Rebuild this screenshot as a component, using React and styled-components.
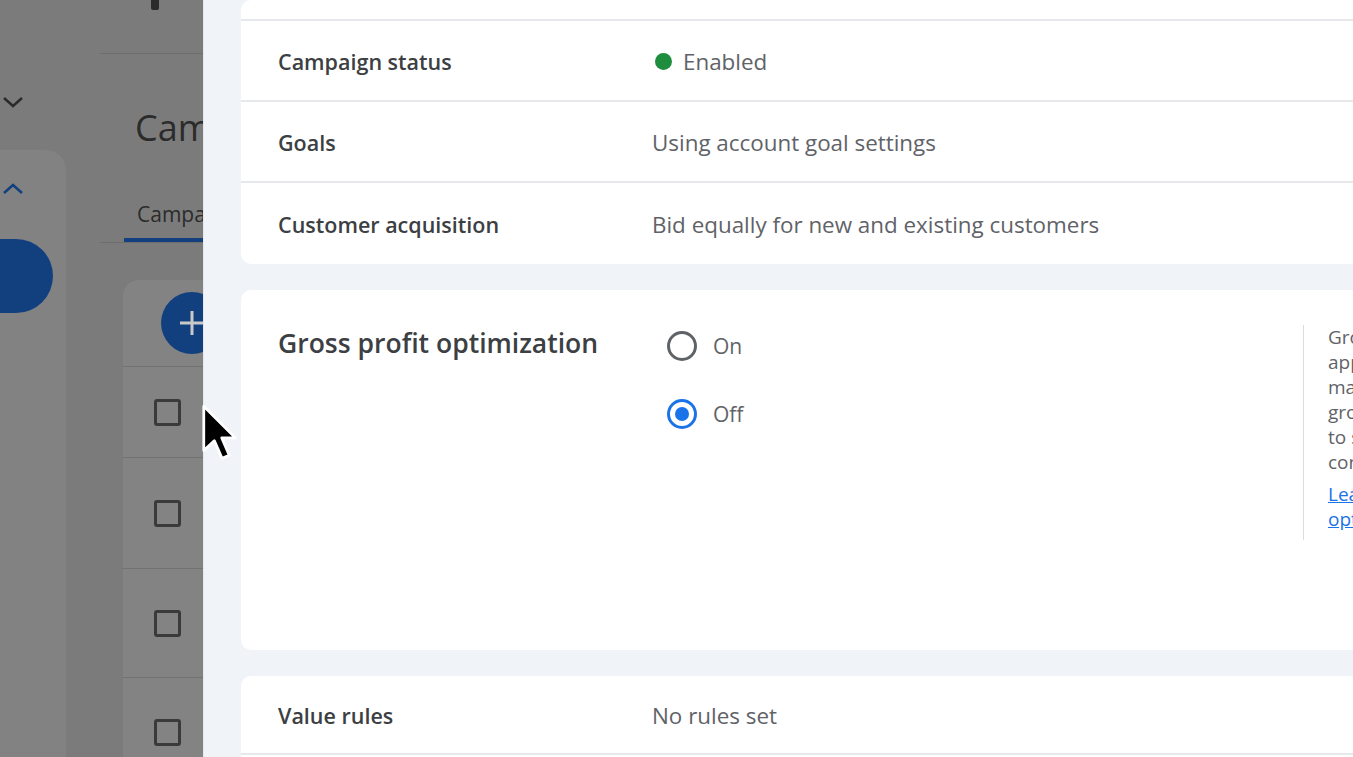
import React from 'react'
import styled, { createGlobalStyle } from 'styled-components'

const GlobalStyle = createGlobalStyle`
  html, body { margin: 0; height: 100%; overflow: hidden; }
  body { font-family: "Open Sans", Roboto, "Liberation Sans", sans-serif; }
  svg { display: block; }
`;

const Screen = styled.div`
  position: relative;
  display: flex;
  width: 1353px;
  height: 757px;
  overflow: hidden;
`;

/* dimmed page behind the side panel */
const Backdrop = styled.div`
  flex: none;
  width: 203px;
  display: flex;
  background: #7b7b7b;
  overflow: hidden;
`;

const NavRail = styled.div`
  flex: none;
  width: 66px;
  display: flex;
  flex-direction: column;
`;

const RailTop = styled.div`
  flex: none;
  height: 150px;
  padding: 96px 0 0 2px;
  box-sizing: border-box;
`;

const NavCard = styled.div`
  flex: 1;
  background: #828282;
  border-top-right-radius: 20px;
  padding: 33px 0 0 2px;
`;

const Pill = styled.div`
  width: 100px;
  height: 74px;
  margin: 44px 0 0 -49px;
  border-radius: 37px;
  background: #12407f;
`;

const Main = styled.div`
  flex: none;
  width: 137px;
  padding-left: 34px;
`;

const TopBar = styled.div`
  height: 53px;
  width: 400px;
  border-bottom: 1px solid #6d6d6d;
`;

const TopIcon = styled.div`
  width: 8px;
  height: 10px;
  margin-left: 51px;
  background: #2b2b2b;
  border-radius: 0 0 2px 2px;
`;

const PageTitle = styled.div`
  margin-top: 52px;
  padding-left: 35px;
  font-size: 36px;
  line-height: 44px;
  color: #2b2b2b;
  white-space: nowrap;
`;

const TabBar = styled.div`
  width: 400px;
  height: 92px;
  display: flex;
  align-items: flex-end;
  border-bottom: 1px solid #6d6d6d;
`;

const Tab = styled.div`
  margin-left: 24px;
  padding: 0 13px 10px;
  font-size: 21px;
  line-height: 28px;
  color: #2b2b2b;
  border-bottom: 4px solid #12407f;
  white-space: nowrap;
`;

const TableCard = styled.div`
  width: 400px;
  height: 520px;
  margin: 37px 0 0 23px;
  background: #838383;
  border-top-left-radius: 16px;
`;

const TableHead = styled.div`
  height: 87px;
  box-sizing: border-box;
  padding-left: 38px;
  display: flex;
  align-items: center;
  border-bottom: 1px solid #727272;
`;

const Fab = styled.div`
  width: 62px;
  height: 62px;
  border-radius: 50%;
  background: #12407f;
  display: flex;
  align-items: center;
  justify-content: center;
`;

const TableRow = styled.div`
  height: ${p => p.$h}px;
  box-sizing: border-box;
  padding-left: 31px;
  display: flex;
  align-items: center;
  border-bottom: 1px solid #727272;
`;

const Checkbox = styled.div`
  width: 27px;
  height: 27px;
  box-sizing: border-box;
  border: 3px solid #3a3a3a;
  border-radius: 3px;
`;

/* side panel */
const Panel = styled.div`
  flex: 1;
  min-width: 0;
  background: #f0f4f9;
  padding-left: 38px;
  overflow: hidden;
  box-shadow: inset 1px 0 0 #e4e8ee;
`;

const Stack = styled.div`
  width: 1250px;
  display: flex;
  flex-direction: column;
  gap: 26px;
`;

const Card = styled.div`
  flex: none;
  background: #fff;
  border-radius: 10px;
  height: ${p => (p.$h ? `${p.$h}px` : 'auto')};
  box-sizing: border-box;
`;

const Row = styled.div`
  height: ${p => p.$h}px;
  box-sizing: border-box;
  display: grid;
  grid-template-columns: 374px 1fr;
  align-items: center;
  padding: 2px 0 0 37px;
  border-bottom: 2px solid #e6e8eb;
  &:last-child { border-bottom: none; }
`;

const Label = styled.div`
  font-size: 21.5px;
  font-weight: 600;
  color: #3c4043;
  white-space: nowrap;
`;

const Value = styled.div`
  display: flex;
  align-items: center;
  font-size: 22.4px;
  color: #5f6368;
  white-space: nowrap;
`;

const StatusDot = styled.span`
  width: 17px;
  height: 17px;
  margin: 0 11px 0 3px;
  border-radius: 50%;
  background: #1e8e3e;
`;

const Section = styled.div`
  display: grid;
  grid-template-columns: 374px 651px 1fr;
  align-items: start;
  padding: 37px 0 0 37px;
`;

const SectionTitle = styled.div`
  font-size: 26.5px;
  line-height: 32px;
  font-weight: 600;
  color: #3c4043;
  white-space: nowrap;
`;

const Options = styled.div`
  display: flex;
  flex-direction: column;
  gap: 38px;
  padding: 4px 0 0 15px;
`;

const Option = styled.label`
  display: flex;
  align-items: center;
  height: 30px;
  font-size: 21px;
  color: #5f6368;
`;

const Radio = styled.span`
  width: 30px;
  height: 30px;
  box-sizing: border-box;
  margin-right: 16px;
  border-radius: 50%;
  border: 3px solid ${p => (p.$on ? '#1a73e8' : '#5f6368')};
  display: flex;
  align-items: center;
  justify-content: center;
  &::after {
    content: '';
    width: 14px;
    height: 14px;
    border-radius: 50%;
    background: ${p => (p.$on ? '#1a73e8' : 'transparent')};
  }
`;

const Help = styled.div`
  margin-top: -2px;
  padding: 0 0 8px 24px;
  border-left: 1px solid #dadce0;
  font-size: 19px;
  line-height: 25px;
  color: #5f6368;
  white-space: nowrap;
`;

const HelpLink = styled.a`
  display: block;
  margin-top: 7px;
  color: #1a73e8;
  text-decoration: underline;
`;

const Cursor = styled.svg`
  position: absolute;
  left: 201px;
  top: 403px;
`;

const Chevron = ({ up, color }) => (
  <svg width="22" height="12" viewBox="0 0 22 12">
    <path d={up ? 'M2 10 L11 2 L20 10' : 'M2 2 L11 10 L20 2'} fill="none" stroke={color} strokeWidth="2.5" />
  </svg>
);

const App = () => {
  return (
    <>
      <GlobalStyle />
      <Screen>
        <Backdrop>
          <NavRail>
            <RailTop>
              <Chevron color="#2b2b2b" />
            </RailTop>
            <NavCard>
              <Chevron up color="#12407f" />
              <Pill />
            </NavCard>
          </NavRail>
          <Main>
            <TopBar>
              <TopIcon />
            </TopBar>
            <PageTitle>Campaigns</PageTitle>
            <TabBar>
              <Tab>Campaigns</Tab>
            </TabBar>
            <TableCard>
              <TableHead>
                <Fab>
                  <svg width="28" height="28" viewBox="0 0 28 28">
                    <path d="M14 2 V26 M2 14 H26" stroke="#c9c9c9" strokeWidth="3" />
                  </svg>
                </Fab>
              </TableHead>
              <TableRow $h={91}><Checkbox /></TableRow>
              <TableRow $h={111}><Checkbox /></TableRow>
              <TableRow $h={109}><Checkbox /></TableRow>
              <TableRow $h={109}><Checkbox /></TableRow>
            </TableCard>
          </Main>
        </Backdrop>

        <Panel>
          <Stack>
            <Card>
              <Row $h={21} />
              <Row $h={81}>
                <Label>Campaign status</Label>
                <Value><StatusDot />Enabled</Value>
              </Row>
              <Row $h={81}>
                <Label>Goals</Label>
                <Value>Using account goal settings</Value>
              </Row>
              <Row $h={81}>
                <Label>Customer acquisition</Label>
                <Value>Bid equally for new and existing customers</Value>
              </Row>
            </Card>

            <Card $h={360}>
              <Section>
                <SectionTitle>Gross profit optimization</SectionTitle>
                <Options>
                  <Option><Radio />On</Option>
                  <Option><Radio $on />Off</Option>
                </Options>
                <Help>
                  Gross profit optimization uses your<br />
                  applied cost of goods sold data to<br />
                  maximize your campaign's total<br />
                  gross profit. Your campaign will aim<br />
                  to show ads for products that<br />
                  contribute more profit.<br />
                  <HelpLink href="#">Learn more about gross profit<br />optimization</HelpLink>
                </Help>
              </Section>
            </Card>

            <Card>
              <Row $h={79}>
                <Label>Value rules</Label>
                <Value>No rules set</Value>
              </Row>
              <Row $h={81}>
                <Label>Ad schedule</Label>
                <Value>All day</Value>
              </Row>
            </Card>
          </Stack>
        </Panel>

        <Cursor width="36" height="62" viewBox="0 0 13 22">
          <path d="M1 1 L1 17 L4.8 13.4 L7.6 19.8 L10.2 18.7 L7.5 12.4 L12.4 12.4 Z" fill="#000" stroke="#fff" strokeWidth="1" strokeLinejoin="round" />
        </Cursor>
      </Screen>
    </>
  )
}

export default App
